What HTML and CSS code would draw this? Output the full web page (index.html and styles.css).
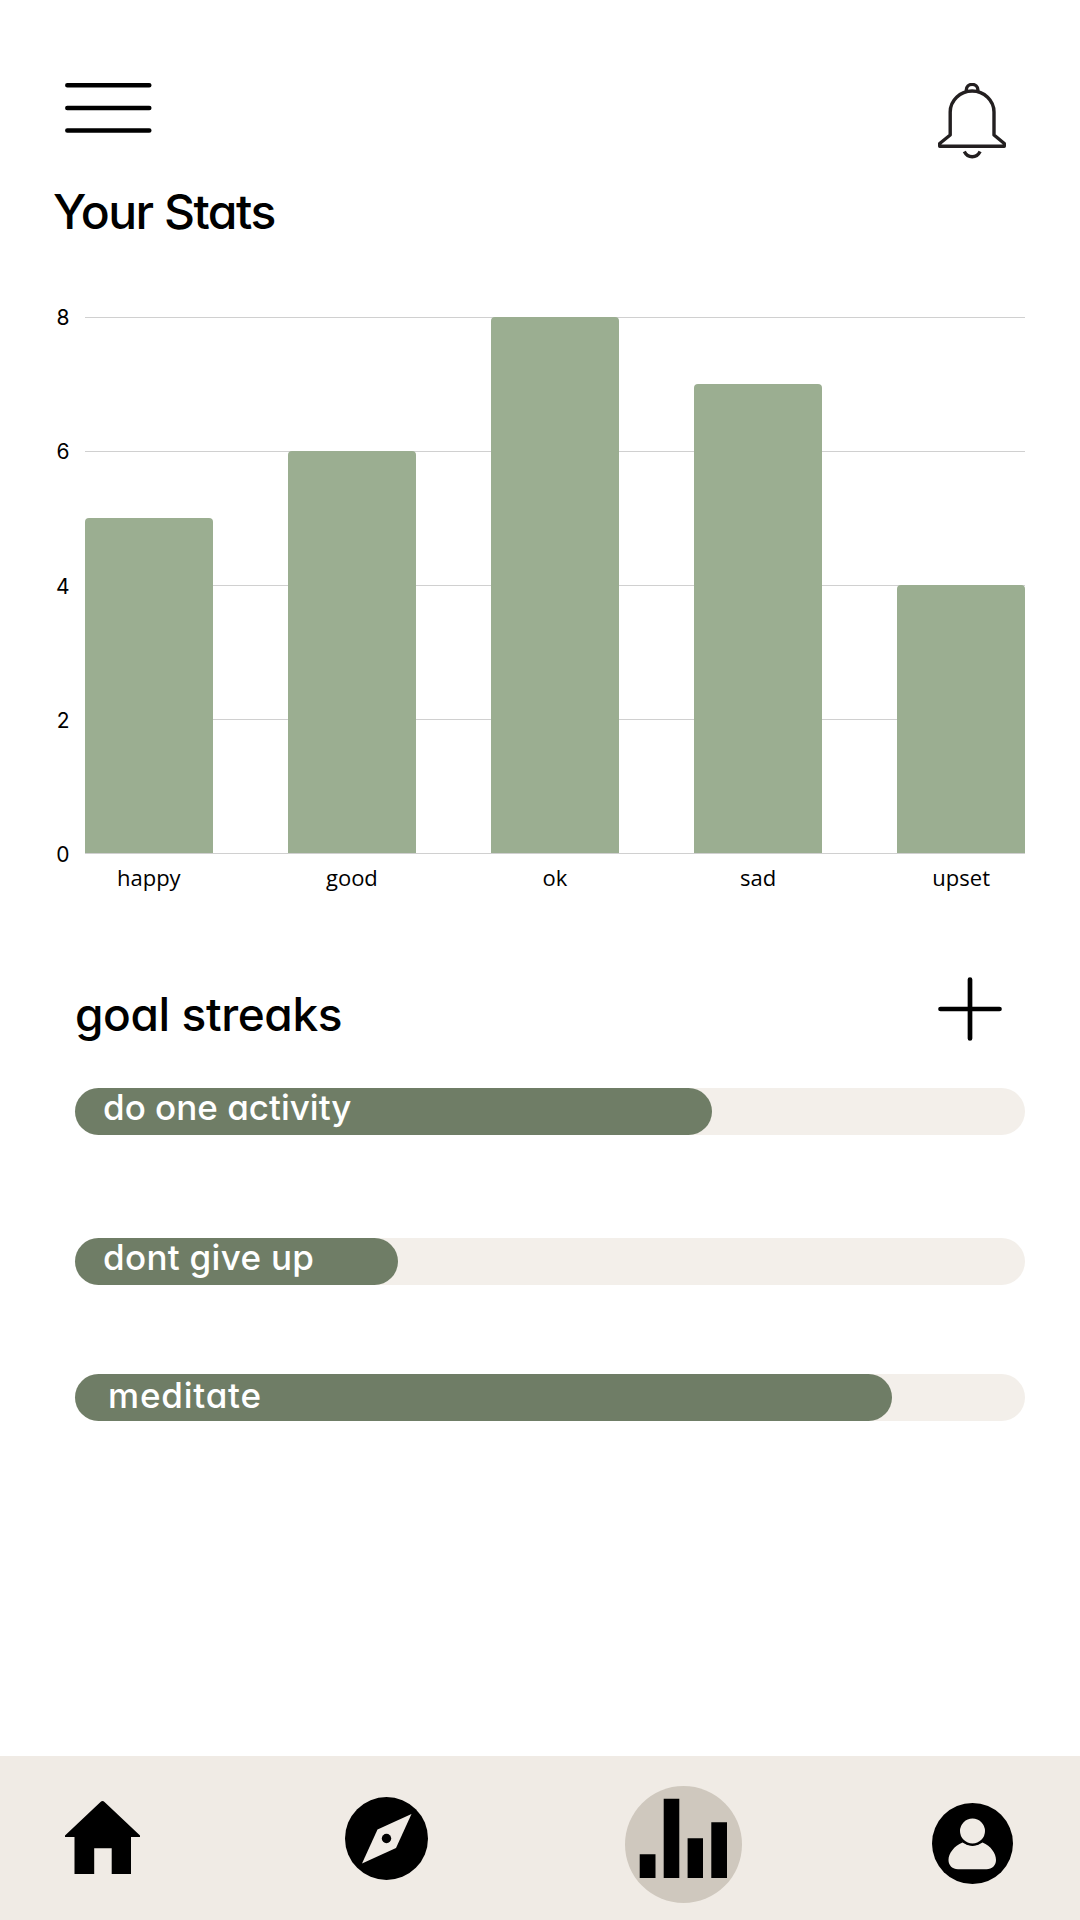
FILE: index.html
```html
<!DOCTYPE html>
<html lang="en">
<head>
<meta charset="utf-8">
<meta name="viewport" content="width=device-width, initial-scale=1.0">
<title>Your Stats</title>
<link rel="stylesheet" href="styles.css">
</head>
<body>
<div id="container">
	<div id="top">
		<svg class="menu" viewBox="0 0 87 50">
			<path d="M2.3 2.3H84.3M2.3 24.9H84.3M2.3 47.4H84.3"/>
		</svg>
		<svg class="bell" viewBox="0 0 68 76">
			<path d="M12.2 52V29A21.9 21 0 0 1 56 29V52L66.3 60.5V63.2H1.7V60.5Z"/>
			<path d="M28.3 8.5V7A5.8 5.6 0 0 1 39.9 7V8.5"/>
			<path d="M26.3 68.5Q29 73.8 34.2 73.8T42.1 68.5"/>
		</svg>
	</div>
	<h1>Your Stats</h1>

	<div class="chart">
		<div class="axis">
			<span>8</span>
			<span>6</span>
			<span>4</span>
			<span>2</span>
			<span>0</span>
		</div>
		<div class="plot">
			<div class="bar" style="height:62.5%"></div>
			<div class="bar" style="height:75%"></div>
			<div class="bar" style="height:100%"></div>
			<div class="bar" style="height:87.5%"></div>
			<div class="bar" style="height:50%"></div>
		</div>
		<div class="labels">
			<span>happy</span>
			<span>good</span>
			<span>ok</span>
			<span>sad</span>
			<span>upset</span>
		</div>
	</div>

	<div class="goals">
		<div class="goalhead">
			<h2>goal streaks</h2>
			<svg class="plus" viewBox="0 0 64 64">
				<path d="M32 2.5V61.5M2.5 32H61.5"/>
			</svg>
		</div>
		<div class="track goal1"><div class="fill" style="width:67%"><span>do one activity</span></div></div>
		<div class="track goal2"><div class="fill" style="width:34%"><span>dont give up</span></div></div>
		<div class="track goal3"><div class="fill" style="width:86%"><span>meditate</span></div></div>
	</div>

	<div id="bottom">
		<svg class="home" viewBox="0 0 75 73">
			<path d="M37.5 0Q38.5 0 39.5 1L75 34.5V36H66V73H46.7V47.3H29.2V73H9.5V36H0V34.5L35.5 1Q36.5 0 37.5 0Z"/>
		</svg>
		<svg class="compass" viewBox="0 0 83 83">
			<circle cx="41.5" cy="41.5" r="41.5"/>
			<path class="cut" d="M66.5 17L51 51L17 66.5L32.5 32.5Z"/>
			<circle cx="41.5" cy="41.5" r="4.7"/>
		</svg>
		<svg class="stats" viewBox="0 0 117 117">
			<circle class="disc" cx="58.5" cy="58.5" r="58.5"/>
			<path d="M14.7 68.3H30.5V92H14.7ZM38.7 12.7H54.3V92H38.7ZM62.6 52.3H78V92H62.6ZM86.3 36.3H102V92H86.3Z"/>
		</svg>
		<svg class="user" viewBox="0 0 81 81">
			<circle cx="40.5" cy="40.5" r="40.5"/>
			<path class="cut" d="M30.5 39.5Q40.5 46.5 50.5 39.5C59 43 64 50.5 64 57C64 62.5 60 66.3 54.5 66.3H26C20.5 66.3 16.5 62.5 16.5 57C16.5 50.5 22 43 30.5 39.5Z"/>
			<circle class="cut head" cx="40.5" cy="28" r="13.5"/>
		</svg>
	</div>
</div>
</body>
</html>
```

FILE: styles.css
```css
body, h1, h2 {margin:0; padding:0;}
body{
	background-color: #ffffff;
	color: #000000;
	font-family: Inter, sans-serif;
}
svg{
	display: block;
	flex: none;
}
#container{
	display: flex;
	flex-direction: column;
	height: 1920px;
	box-sizing: border-box;
}
#top{
	display: flex;
	justify-content: space-between;
	height: 76px;
	padding: 83px 74px 0 65px;
}
.menu, .bell, .plus{
	fill: none;
	stroke: #000000;
	stroke-linecap: round;
}
.menu{
	width: 87px;
	height: 50px;
	stroke-width: 4.5;
}
.bell{
	width: 68px;
	height: 76px;
	stroke: #231f20;
	stroke-width: 3.4;
	stroke-linecap: butt;
	stroke-linejoin: round;
}
h1, h2, .fill{
	font-feature-settings: "cv11";
	font-weight: 500;
	white-space: nowrap;
}
h1{
	margin: 23px 0 0 53px;
	font-size: 48px;
	line-height: 60px;
	letter-spacing: -1.5px;
}

/* mood chart */
.chart{
	display: grid;
	grid-template-columns: 69.5px 940px;
	grid-template-rows: 537px auto;
	column-gap: 15.5px;
	margin-top: 75px;
	font-family: "Open Sans", sans-serif;
	font-size: 22px;
	line-height: 30px;
}
.axis{
	display: flex;
	flex-direction: column;
	justify-content: space-between;
	margin: -14px 0 -16px;
	font-family: Inter, sans-serif;
	font-size: 21px;
	text-align: right;
}
.plot{
	display: flex;
	align-items: flex-end;
	justify-content: space-between;
	background-image: linear-gradient(#d0d0d0 1px, transparent 1px);
	background-size: 100% 134px;
	border-bottom: 1px solid #d0d0d0;
}
.bar{
	width: 127.6px;
	background-color: #9bae91;
	border-radius: 4px 4px 0 0;
}
.labels{
	grid-column: 2;
	display: flex;
	justify-content: space-between;
	margin-top: 8px;
}
.labels span{
	width: 127.6px;
	text-align: center;
}

/* goals */
.goals{
	margin: 85px 55px 0 75px;
}
.goalhead{
	display: flex;
	justify-content: space-between;
	height: 111px;
	padding-right: 23.5px;
}
h2{
	padding-top: 7px;
	font-size: 46px;
	line-height: 60px;
	letter-spacing: -0.4px;
}
.plus{
	width: 64px;
	height: 64px;
	stroke-width: 4.7;
}
.track{
	height: 47px;
	background-color: #f3efea;
	border-radius: 24px;
}
.fill{
	height: 47px;
	box-sizing: border-box;
	padding-left: 28px;
	background-color: #6f7d66;
	border-radius: 24px;
	color: #ffffff;
	font-size: 35px;
	line-height: 38px;
}
.goal2{margin-top: 103px;}
.goal2 .fill{letter-spacing: 0.3px;}
.goal3{margin-top: 89px;}
.goal3 .fill{
	padding-left: 33px;
	line-height: 42px;
	letter-spacing: 0.8px;
}

/* nav bar */
#bottom{
	display: flex;
	height: 164px;
	margin-top: auto;
	background-color: #f0ebe5;
}
.home{
	width: 75px;
	height: 73px;
	margin: 45px 0 0 65px;
}
.compass{
	width: 83px;
	height: 83px;
	margin: 41px 0 0 205px;
}
.stats{
	width: 117px;
	height: 117px;
	margin: 30px 0 0 196.5px;
}
.user{
	width: 81px;
	height: 81px;
	margin: 47px 0 0 190.5px;
}
.disc{fill: #cfc8be;}
.cut{fill: #f0ebe5;}
.head{
	stroke: #000000;
	stroke-width: 2;
}
```
